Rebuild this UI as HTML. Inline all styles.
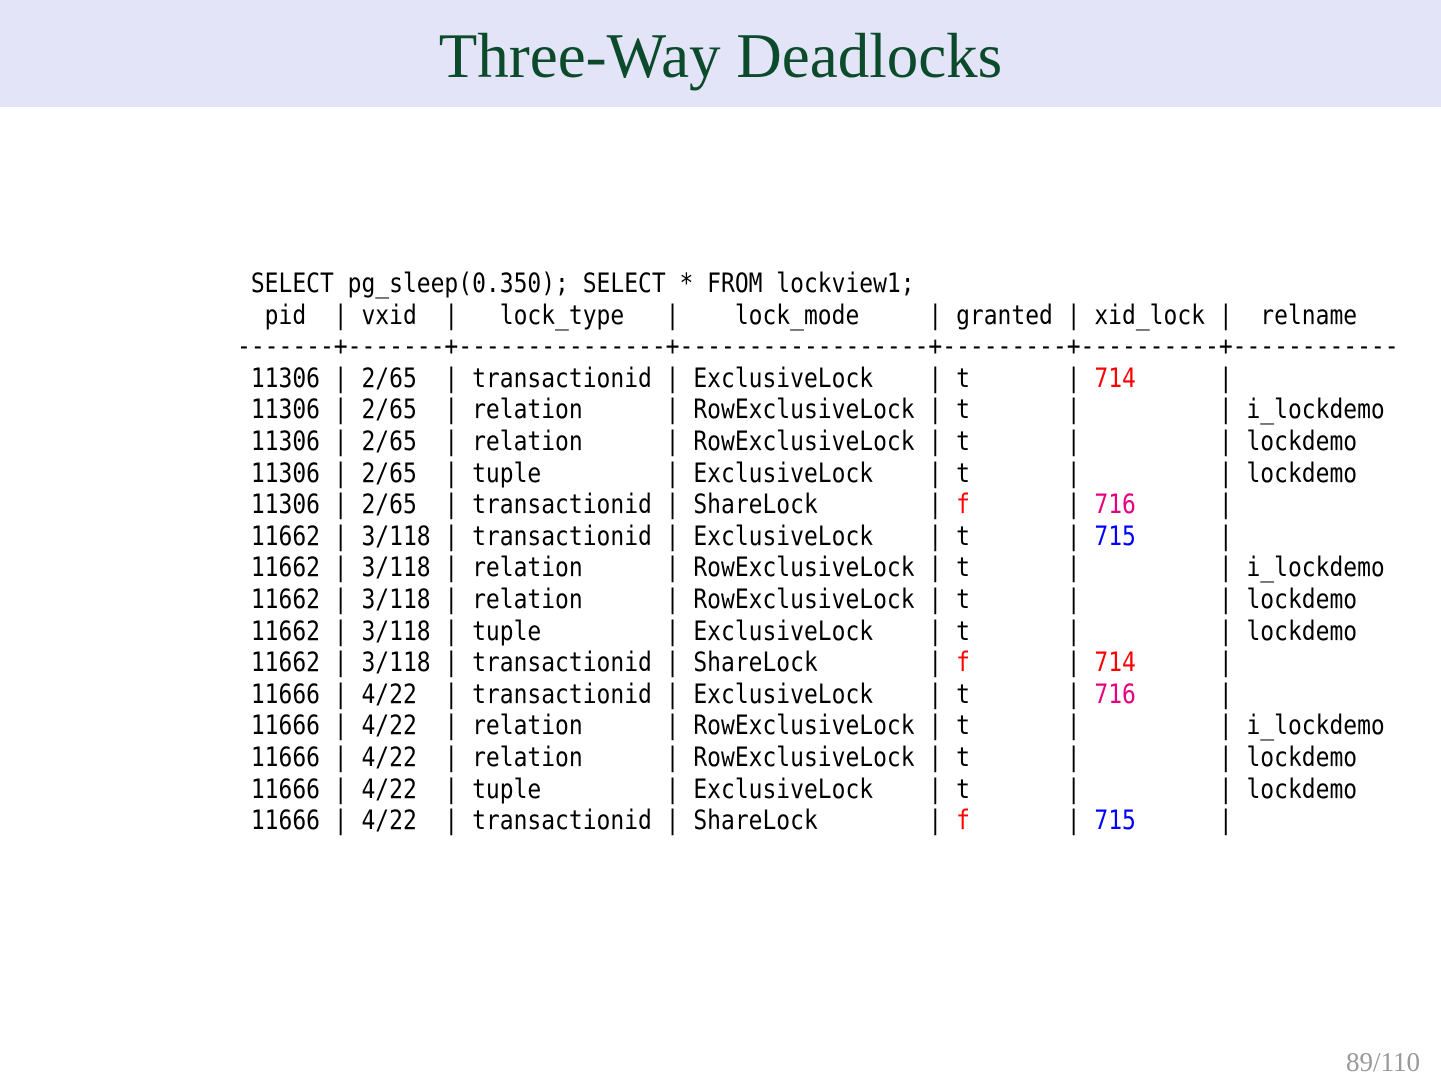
<!DOCTYPE html>
<html><head><meta charset="utf-8"><style>
body{margin:0;width:1441px;height:1081px;background:#fff;position:relative;overflow:hidden}
.band{position:absolute;left:0;top:0;width:1441px;height:107px;background:#e3e4f8}
.title{position:absolute;left:0;width:1441px;top:19px;text-align:center;font-family:"Liberation Serif",serif;font-size:63px;line-height:75px;color:#0b4a2a;white-space:nowrap}
pre{position:absolute;left:237px;top:269px;margin:0;font-family:"DejaVu Sans Mono",monospace;font-size:22.97px;line-height:31.6px;color:#000;letter-spacing:0}
pre span.l{display:block;height:31.6px;transform:scaleY(1.18);transform-origin:50% 55%}
.r{color:#ff0000}.m{color:#e6007e}.b{color:#0000ff}
.pg{position:absolute;right:21px;top:1046px;font-family:"Liberation Serif",serif;font-size:27px;line-height:32px;color:#999}
</style></head><body>
<div class="band"></div>
<div class="title">Three-Way Deadlocks</div>
<pre><span class="l"> SELECT pg_sleep(0.350); SELECT * FROM lockview1;</span><span class="l">  pid  | vxid  |   lock_type   |    lock_mode     | granted | xid_lock |  relname</span><span class="l">-------+-------+---------------+------------------+---------+----------+------------</span><span class="l"> 11306 | 2/65  | transactionid | ExclusiveLock    | t       | <span class="r">714</span>      |</span><span class="l"> 11306 | 2/65  | relation      | RowExclusiveLock | t       |          | i_lockdemo</span><span class="l"> 11306 | 2/65  | relation      | RowExclusiveLock | t       |          | lockdemo</span><span class="l"> 11306 | 2/65  | tuple         | ExclusiveLock    | t       |          | lockdemo</span><span class="l"> 11306 | 2/65  | transactionid | ShareLock        | <span class="r">f</span>       | <span class="m">716</span>      |</span><span class="l"> 11662 | 3/118 | transactionid | ExclusiveLock    | t       | <span class="b">715</span>      |</span><span class="l"> 11662 | 3/118 | relation      | RowExclusiveLock | t       |          | i_lockdemo</span><span class="l"> 11662 | 3/118 | relation      | RowExclusiveLock | t       |          | lockdemo</span><span class="l"> 11662 | 3/118 | tuple         | ExclusiveLock    | t       |          | lockdemo</span><span class="l"> 11662 | 3/118 | transactionid | ShareLock        | <span class="r">f</span>       | <span class="r">714</span>      |</span><span class="l"> 11666 | 4/22  | transactionid | ExclusiveLock    | t       | <span class="m">716</span>      |</span><span class="l"> 11666 | 4/22  | relation      | RowExclusiveLock | t       |          | i_lockdemo</span><span class="l"> 11666 | 4/22  | relation      | RowExclusiveLock | t       |          | lockdemo</span><span class="l"> 11666 | 4/22  | tuple         | ExclusiveLock    | t       |          | lockdemo</span><span class="l"> 11666 | 4/22  | transactionid | ShareLock        | <span class="r">f</span>       | <span class="b">715</span>      |</span></pre>
<div class="pg">89/110</div>
</body></html>
